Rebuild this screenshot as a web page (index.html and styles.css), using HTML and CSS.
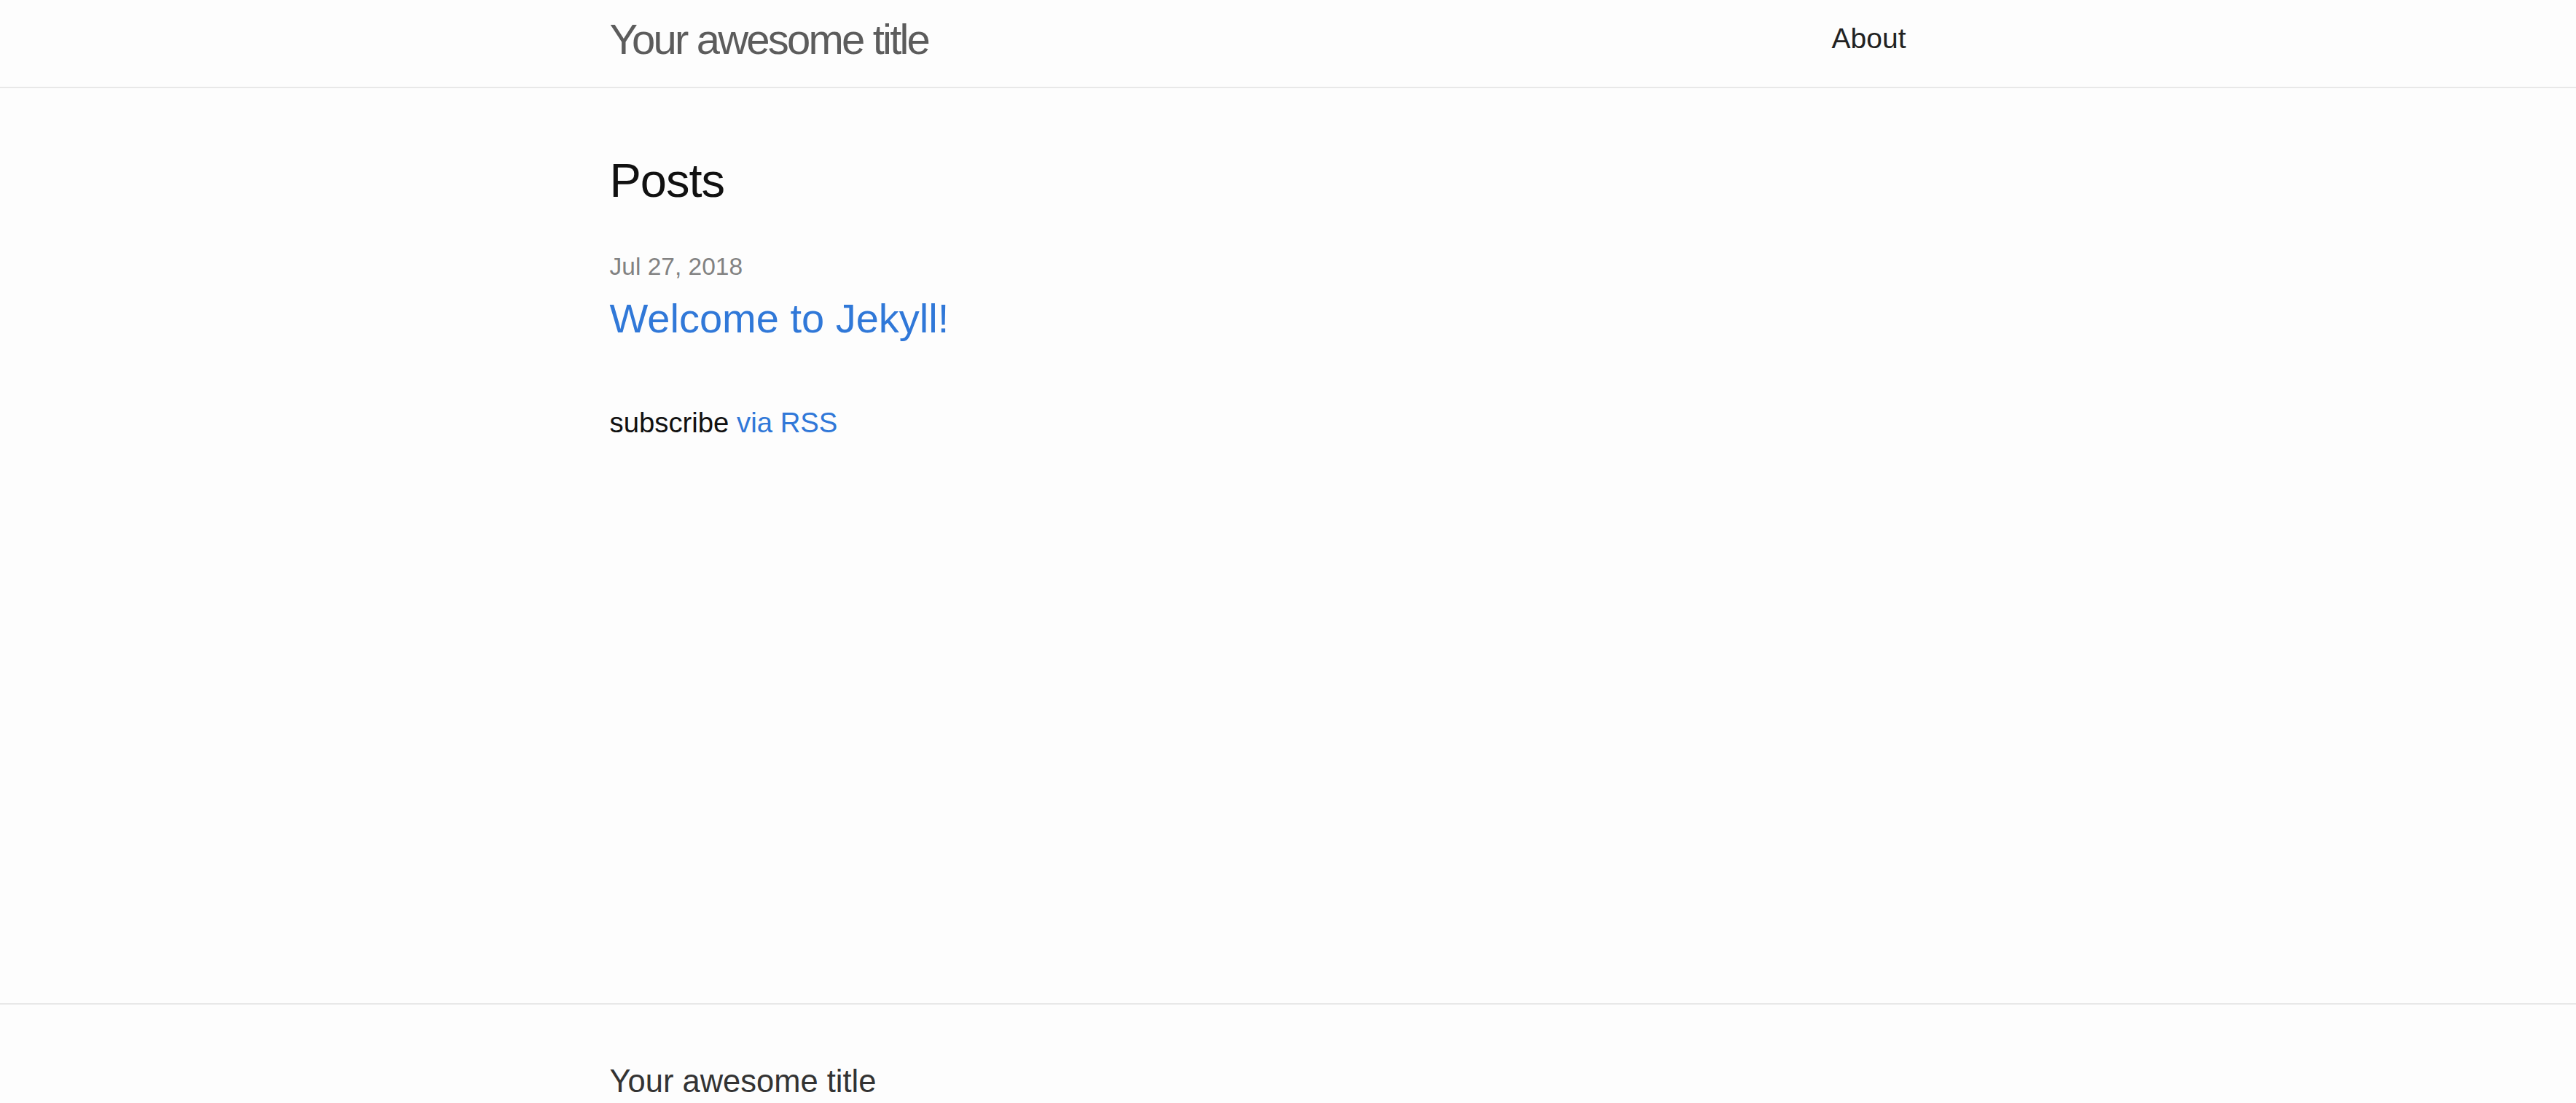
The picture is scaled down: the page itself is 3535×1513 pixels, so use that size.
FILE: index.html
```html
<!DOCTYPE html>
<html lang="en">
<head>
<meta charset="utf-8">
<title>Your awesome title</title>
<link rel="stylesheet" href="styles.css">
</head>
<body>
<header class="site-header">
  <div class="wrapper header-row">
    <a class="site-title" href="#">Your awesome title</a>
    <nav class="site-nav">
      <a class="page-link" href="#">About</a>
    </nav>
  </div>
</header>
<main class="page-content">
  <div class="wrapper">
    <h2 class="post-list-heading">Posts</h2>
    <ul class="post-list">
      <li>
        <span class="post-meta">Jul 27, 2018</span>
        <h3 class="post-title"><a class="post-link" href="#">Welcome to Jekyll!</a></h3>
      </li>
    </ul>
    <p class="rss-subscribe">subscribe <a href="#">via RSS</a></p>
  </div>
</main>
<footer class="site-footer">
  <div class="wrapper">
    <h2 class="footer-heading">Your awesome title</h2>
  </div>
</footer>
</body>
</html>
```
FILE: styles.css
```css
* { box-sizing: border-box; }

html, body {
  margin: 0;
  padding: 0;
}

body {
  background: #fdfdfd;
  color: #111111;
  font-family: "Liberation Sans", Arial, Helvetica, sans-serif;
}

a { text-decoration: none; }

.wrapper {
  width: 1779px;
  margin-left: calc(50% - 931px);
}

.site-header {
  height: 121px;
  border-bottom: 2px solid #e8e8e8;
}

.header-row {
  display: flex;
  justify-content: space-between;
  align-items: flex-start;
}

.site-title {
  font-size: 58px;
  line-height: 107px;
  letter-spacing: -2.8px;
  color: #5c5c5c;
  font-weight: 400;
}

.page-link {
  font-size: 39px;
  line-height: 106px;
  color: #222222;
}

.page-content {
  min-height: 1255px;
  padding-top: 88px;
}

.post-list-heading {
  margin: 0 0 54px;
  font-size: 65px;
  line-height: 78px;
  font-weight: 400;
  letter-spacing: -1px;
  color: #111111;
}

.post-list {
  list-style: none;
  margin: 0;
  padding: 0;
}

.post-meta {
  display: block;
  font-size: 33.5px;
  line-height: 50px;
  color: #828282;
}

.post-title {
  margin: 12px 0 0;
  font-size: 56px;
  line-height: 67px;
  font-weight: 400;
}

.post-link { color: #3078d8; }

.rss-subscribe {
  margin: 81px 0 0;
  font-size: 38.3px;
  line-height: 57px;
  color: #111111;
}

.rss-subscribe a { color: #3078d8; }

.site-footer {
  border-top: 2px solid #e8e8e8;
  padding-top: 80px;
  padding-bottom: 60px;
}

.footer-heading {
  margin: 0;
  font-size: 43.5px;
  line-height: 50px;
  font-weight: 400;
  color: #333333;
}
```
